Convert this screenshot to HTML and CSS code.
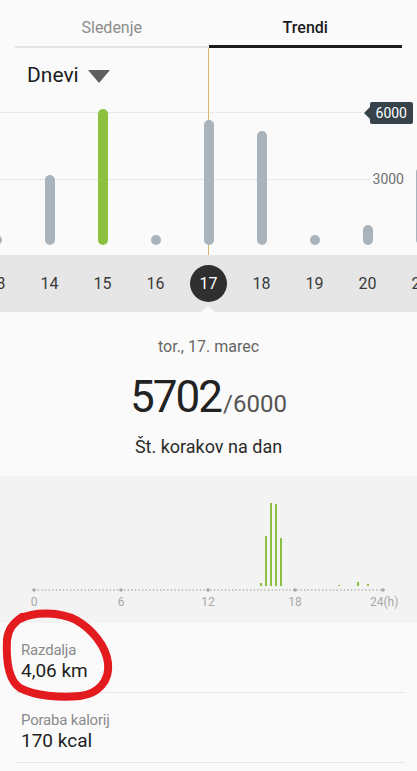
FILE: index.html
```html
<!DOCTYPE html>
<html lang="sl">
  <head>
    <meta charset="UTF-8" />
    <meta name="viewport" content="width=device-width, initial-scale=1.0" />
    <title>Koraki - Trendi</title>
    <link rel="stylesheet" href="styles.css">
  </head>
  <body>
    <div class="tabs">
      <div class="tab">Sledenje</div>
      <div class="tab active">Trendi</div>
    </div>

    <div class="trend">
      <div class="range">Dnevi <span class="caret"></span></div>
      <div class="grid-line line-6000"></div>
      <div class="grid-line line-3000"></div>
      <div class="tag">6000</div>
      <div class="axis-label">3000</div>
      <div class="cursor"></div>
      <div class="bars">
        <div class="col"><div class="bar"></div></div>
        <div class="col"><div class="bar" style="height:70px"></div></div>
        <div class="col"><div class="bar goal" style="height:136px"></div></div>
        <div class="col"><div class="bar"></div></div>
        <div class="col"><div class="bar" style="height:125px"></div></div>
        <div class="col"><div class="bar" style="height:114px"></div></div>
        <div class="col"><div class="bar"></div></div>
        <div class="col"><div class="bar" style="height:20px"></div></div>
        <div class="col"><div class="bar" style="height:78px"></div></div>
      </div>
    </div>

    <div class="days">
      <div class="day">13</div>
      <div class="day">14</div>
      <div class="day">15</div>
      <div class="day">16</div>
      <div class="day current"><span>17</span></div>
      <div class="day">18</div>
      <div class="day">19</div>
      <div class="day">20</div>
      <div class="day">21</div>
    </div>

    <div class="summary">
      <div class="date">tor., 17. marec</div>
      <div class="count">5702<span class="target">/6000</span></div>
      <div class="caption">Št. korakov na dan</div>
    </div>

    <div class="hourly">
      <svg width="417" height="147" viewBox="0 0 417 147">
        <line x1="34" y1="114" x2="383" y2="114" stroke="#b4b4b4" stroke-width="1.4" stroke-dasharray="1.4 2.2" />
        <circle cx="34" cy="114" r="1.8" fill="#a8a8a8" />
        <circle cx="121" cy="114" r="1.8" fill="#a8a8a8" />
        <circle cx="208" cy="114" r="1.8" fill="#a8a8a8" />
        <circle cx="295" cy="114" r="1.8" fill="#a8a8a8" />
        <circle cx="383" cy="114" r="1.8" fill="#a8a8a8" />
        <g fill="#8cc13f">
          <rect x="260" y="107" width="2" height="3" />
          <rect x="265" y="60" width="2" height="50" />
          <rect x="270" y="27" width="2" height="83" />
          <rect x="275" y="28" width="2" height="82" />
          <rect x="280" y="62" width="2" height="48" />
          <rect x="338" y="109" width="2" height="1" />
          <rect x="357" y="106" width="2" height="4" />
          <rect x="367" y="108" width="2" height="2" />
        </g>
        <g class="hour-labels">
          <text x="34" y="130">0</text>
          <text x="121" y="130">6</text>
          <text x="208" y="130">12</text>
          <text x="295" y="130">18</text>
          <text x="383" y="130">24(h)</text>
        </g>
      </svg>
    </div>

    <div class="stats">
      <div class="stat">
        <div class="stat-label">Razdalja</div>
        <div class="stat-value">4,06 km</div>
      </div>
      <div class="stat">
        <div class="stat-label">Poraba kalorij</div>
        <div class="stat-value">170 kcal</div>
      </div>
    </div>

    <svg class="scribble" width="120" height="110" viewBox="0 600 120 110">
      <path d="M 20 619 C 35 611, 60 612, 76 620 C 92 629, 106 646, 108 663 C 110 681, 98 694, 80 696 C 60 698, 35 696, 20 688 C 8 680, 6 660, 7 640 C 8 630, 12 624, 22 617" fill="none" stroke="#e31b1f" stroke-width="8" stroke-linecap="round" />
    </svg>
  </body>
</html>
```

FILE: styles.css
```css
* {
  box-sizing: border-box;
}
body {
  margin: 0;
  width: 417px;
  overflow: hidden;
  position: relative;
  background-color: #fafafa;
  color: #222;
  font-family: Roboto, "Noto Sans", sans-serif;
}
.tabs {
  display: flex;
  height: 48px;
  padding: 0 15px;
}
.tab {
  flex: 1;
  text-align: center;
  font-size: 16px;
  line-height: 20px;
  padding-top: 18px;
  color: #8c8c8c;
  border-bottom: 2px solid #e4e4e4;
}
.tab.active {
  color: #1c1c1c;
  font-weight: 500;
  border-bottom: 3px solid #1c1c1c;
}
.trend {
  position: relative;
  height: 207px;
}
.range {
  height: 47px;
  padding: 7px 0 0 27px;
  font-size: 21px;
  line-height: 40px;
  color: #1c1c1c;
  display: flex;
  align-items: center;
}
.caret {
  margin-left: 9px;
  margin-top: 3px;
  width: 0;
  height: 0;
  border-left: 11.5px solid transparent;
  border-right: 11.5px solid transparent;
  border-top: 13px solid #5f5f5f;
}
.grid-line {
  position: absolute;
  left: 0;
  border-top: 1px dotted #d4d4d4;
}
.line-6000 {
  top: 64px;
  right: 56px;
}
.line-3000 {
  top: 131px;
  right: 48px;
}
.tag {
  position: absolute;
  top: 54px;
  right: 4px;
  height: 22px;
  padding: 0 6px;
  background-color: #36434b;
  color: #fff;
  font-size: 14px;
  line-height: 22px;
  border-radius: 2px;
}
.tag::before {
  content: "";
  position: absolute;
  left: -6px;
  top: 5px;
  border-top: 6px solid transparent;
  border-bottom: 6px solid transparent;
  border-right: 6px solid #36434b;
}
.axis-label {
  position: absolute;
  top: 122px;
  right: 13px;
  font-size: 14px;
  line-height: 18px;
  color: #707070;
}
.cursor {
  position: absolute;
  left: 208px;
  top: 0;
  bottom: 0;
  width: 1px;
  background-color: #d8b56b;
}
.bars {
  display: flex;
  align-items: flex-end;
  height: 160px;
  margin-left: -30px;
  padding-bottom: 10px;
}
.col {
  flex: 0 0 53px;
  display: flex;
  justify-content: center;
}
.bar {
  position: relative;
  z-index: 1;
  width: 10px;
  height: 10px;
  border-radius: 5px;
  background-color: #a8b3bb;
}
.bar.goal {
  background-color: #8cc13f;
}
.days {
  position: relative;
  display: flex;
  height: 57px;
  margin-left: -30px;
  background-color: #e6e6e6;
}
.days::after {
  content: "";
  position: absolute;
  left: 231px;
  bottom: 0;
  border-left: 7px solid transparent;
  border-right: 7px solid transparent;
  border-bottom: 6px solid #fafafa;
}
.day {
  flex: 0 0 53px;
  display: flex;
  align-items: center;
  justify-content: center;
  font-size: 16px;
  color: #3a3a3a;
}
.day.current span {
  width: 37px;
  height: 37px;
  border-radius: 50%;
  background-color: #2f2f2f;
  color: #fff;
  display: flex;
  align-items: center;
  justify-content: center;
}
.summary {
  height: 164px;
  padding-top: 25px;
  text-align: center;
}
.date {
  font-size: 16px;
  line-height: 20px;
  color: #666;
}
.count {
  margin-top: 16px;
  font-size: 44px;
  line-height: 48px;
  letter-spacing: -2px;
  color: #222;
}
.target {
  font-size: 24px;
  letter-spacing: 0;
  color: #555;
  margin-left: 2px;
}
.caption {
  margin-top: 9px;
  font-size: 18px;
  line-height: 20px;
  color: #2a2a2a;
}
.hourly {
  height: 147px;
  background-color: #f3f3f3;
}
.hourly svg {
  display: block;
}
.hour-labels text {
  font-family: Roboto, "Noto Sans", sans-serif;
  font-size: 12px;
  fill: #a8a8a8;
  text-anchor: middle;
}
.hour-labels text:last-child {
  text-anchor: start;
  transform: translateX(-13px);
}
.stats {
  padding: 0 12px 0 16px;
}
.stat {
  height: 70px;
  padding: 18px 5px 0;
  border-bottom: 1px solid #e6e6e6;
}
.stat-label {
  font-size: 15px;
  line-height: 18px;
  letter-spacing: -0.2px;
  color: #8a8a8a;
}
.stat-value {
  font-size: 19px;
  line-height: 23px;
  color: #1e1e1e;
}
.scribble {
  position: absolute;
  left: 0;
  top: 600px;
}
```
